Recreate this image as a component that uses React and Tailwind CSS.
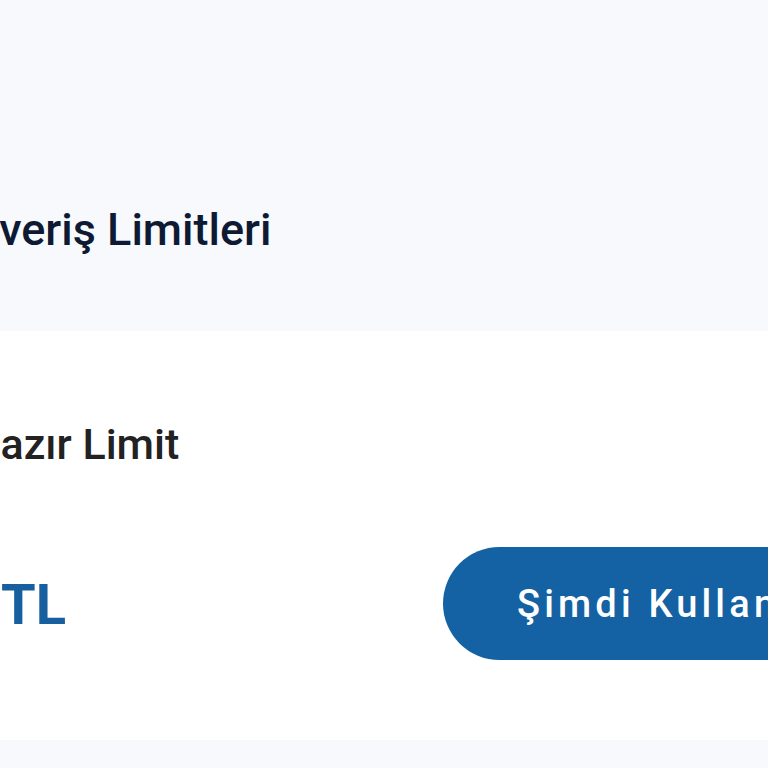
export default function App() {
  return (
    <div className="w-[768px] h-[768px] overflow-hidden bg-[#f7f9fd]" style={{ fontFamily: "Roboto, 'Noto Sans', sans-serif" }}>
      <div className="h-[331px] pt-[207px]">
        <h1 className="ml-[-77px] text-[45px] leading-none font-medium text-[#0e1a33] whitespace-nowrap">Alışveriş Limitleri</h1>
      </div>
      <div className="h-[409px] bg-white">
        <div className="pt-[92px]">
          <h2 className="ml-[-30px] text-[43px] leading-none font-medium text-[#222222] whitespace-nowrap">Hazır Limit</h2>
        </div>
        <div className="mt-[81px] flex items-center">
          <div className="w-[66px] flex justify-end whitespace-nowrap shrink-0 pt-[2px]">
            <span className="text-[56px] leading-none font-bold text-[#185fa0]">10.000 TL</span>
          </div>
          <button className="ml-[377px] h-[113px] pl-[74px] pr-[60px] rounded-l-full bg-[#1462a3] text-white text-[38px] leading-none font-medium tracking-[0.11em] whitespace-nowrap shrink-0">
            Şimdi Kullan
          </button>
        </div>
      </div>
    </div>
  );
}
